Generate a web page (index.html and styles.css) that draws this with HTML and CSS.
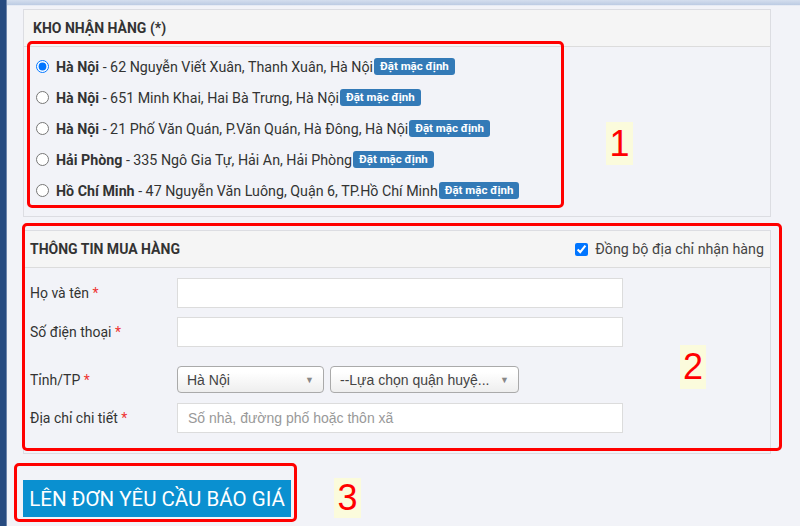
FILE: index.html
```html
<!DOCTYPE html>
<html lang="vi">
<head>
    <meta charset="UTF-8">
    <meta name="viewport" content="width=device-width, initial-scale=1.0">
    <title>Lên đơn yêu cầu báo giá</title>
    <link rel="stylesheet" href="styles.css">
</head>
<body>
    <div class="side"></div>
    <div class="page">
        <div class="topbar"></div>
        <div class="content">
            <div class="panel panel-kho">
                <div class="panel-head">KHO NHẬN HÀNG (*)</div>
                <div class="panel-body">
                    <label class="kho"><input type="radio" name="kho" checked><b>Hà Nội</b>&nbsp;- 62 Nguyễn Viết Xuân, Thanh Xuân, Hà Nội<span class="badge">Đặt mặc định</span></label>
                    <label class="kho"><input type="radio" name="kho"><b>Hà Nội</b>&nbsp;- 651 Minh Khai, Hai Bà Trưng, Hà Nội<span class="badge">Đặt mặc định</span></label>
                    <label class="kho"><input type="radio" name="kho"><b>Hà Nội</b>&nbsp;- 21 Phố Văn Quán, P.Văn Quán, Hà Đông, Hà Nội<span class="badge">Đặt mặc định</span></label>
                    <label class="kho"><input type="radio" name="kho"><b>Hải Phòng</b>&nbsp;- 335 Ngô Gia Tự, Hải An, Hải Phòng<span class="badge">Đặt mặc định</span></label>
                    <label class="kho"><input type="radio" name="kho"><b>Hồ Chí Minh</b>&nbsp;- 47 Nguyễn Văn Luông, Quận 6, TP.Hồ Chí Minh<span class="badge">Đặt mặc định</span></label>
                </div>
            </div>

            <div class="panel panel-info">
                <div class="panel-head">
                    <span>THÔNG TIN MUA HÀNG</span>
                    <label class="sync"><input type="checkbox" checked>Đồng bộ địa chỉ nhận hàng</label>
                </div>
                <div class="panel-body form">
                    <div class="row">
                        <label class="lbl">Họ và tên <i>*</i></label>
                        <input class="txt" type="text">
                    </div>
                    <div class="row">
                        <label class="lbl">Số điện thoại <i>*</i></label>
                        <input class="txt" type="text">
                    </div>
                    <div class="row row-city">
                        <label class="lbl">Tỉnh/TP <i>*</i></label>
                        <div class="sel sel-city">Hà Nội<span class="arrow">&#9660;</span></div>
                        <div class="sel sel-district">--Lựa chọn quận huyệ...<span class="arrow">&#9660;</span></div>
                    </div>
                    <div class="row">
                        <label class="lbl">Địa chỉ chi tiết <i>*</i></label>
                        <input class="txt" type="text" placeholder="Số nhà, đường phố hoặc thôn xã">
                    </div>
                </div>
            </div>

            <button class="btn-quote">LÊN ĐƠN YÊU CẦU BÁO GIÁ</button>
        </div>
    </div>

    <!-- khung chú thích -->
    <div class="mark mark-1"></div>
    <div class="num num-1">1</div>
    <div class="mark mark-2"></div>
    <div class="num num-2">2</div>
    <div class="mark mark-3"></div>
    <div class="num num-3">3</div>
</body>
</html>
```

FILE: styles.css
```css
body {
    margin: 0;
    padding: 0;
    font-family: Roboto, "Liberation Sans", Arial, sans-serif;
    font-size: 14px;
    color: #333;
    background-color: #f2f3f8;
    display: flex;
    min-height: 526px;
    overflow: hidden;
}
.side {
    width: 6px;
    flex: none;
    background-color: #274b80;
    border-right: 1px solid #6f86ab;
}
.page {
    flex: 1;
}
.topbar {
    height: 5px;
    background: linear-gradient(#d4deee, #bccbe3);
    border-bottom: 1px solid #e6ebf4;
}
.content {
    padding: 3px 0 0 16px;
}
.panel {
    width: 746px;
    border: 1px solid #dcdde2;
}
.panel-head {
    height: 36px;
    background-color: #f5f5f5;
    border-bottom: 1px solid #dcdcdc;
    display: flex;
    align-items: center;
    justify-content: space-between;
    padding: 0 6px 0 9px;
    font-size: 14px;
    font-weight: bold;
    color: #333;
}
.panel-kho .panel-body {
    padding: 4px 0 10px 0;
}
.kho {
    display: flex;
    align-items: center;
    height: 31px;
    padding-left: 12px;
    font-size: 14.25px;
    color: #333;
}
.kho input {
    margin: 0 7px 0 0;
    width: 13px;
    height: 13px;
}
.kho b {
    font-weight: bold;
}
.badge {
    display: inline-block;
    background-color: #337ab7;
    color: #fff;
    font-size: 11.5px;
    font-weight: bold;
    padding: 2px 6px;
    border-radius: 3px;
    line-height: 13px;
    margin-left: 1px;
}
.panel-info {
    margin-top: 13px;
}
.panel-info .panel-head {
    padding-left: 6px;
}
.sync {
    display: flex;
    align-items: center;
    font-weight: normal;
    font-size: 14.25px;
    color: #444;
}
.sync input {
    margin: 0 7px 0 0;
    width: 13px;
    height: 13px;
}
.form {
    padding: 10px 0 20px 6px;
}
.row {
    display: flex;
    align-items: center;
    margin-bottom: 9px;
}
.row:last-child {
    margin-bottom: 0;
}
.row-city {
    margin: 19px 0 10px;
}
.lbl {
    width: 147px;
    font-size: 14px;
    color: #333;
}
.lbl i {
    font-style: normal;
    color: #e33;
}
.txt {
    width: 446px;
    height: 30px;
    box-sizing: border-box;
    border: 1px solid #dcdcdc;
    background: #fff;
    padding: 0 10px;
    font-family: "Liberation Sans", Arial, sans-serif;
    font-size: 14px;
    outline: none;
}
.txt::placeholder {
    color: #999;
}
.sel {
    height: 27px;
    box-sizing: border-box;
    border: 1px solid #aaa;
    border-radius: 4px;
    background: linear-gradient(#fff 20%, #eee);
    display: flex;
    align-items: center;
    justify-content: space-between;
    padding: 0 9px;
    font-family: "Liberation Sans", Arial, sans-serif;
    font-size: 14px;
    color: #444;
}
.sel-city {
    width: 147px;
}
.sel-district {
    width: 189px;
    margin-left: 6px;
}
.arrow {
    font-size: 9px;
    color: #888;
}
.btn-quote {
    display: block;
    margin-top: 26px;
    width: 268px;
    height: 37px;
    border: none;
    background-color: #0a90d0;
    color: #fff;
    font-family: Roboto, "Liberation Sans", Arial, sans-serif;
    font-size: 20.5px;
    padding: 0;
}
.mark {
    position: absolute;
    border: 3px solid #f00;
    border-radius: 5px;
    box-sizing: border-box;
}
.mark-1 {
    left: 27px;
    top: 41px;
    width: 537px;
    height: 167px;
}
.mark-2 {
    left: 22px;
    top: 223px;
    width: 760px;
    height: 228px;
}
.mark-3 {
    left: 14px;
    top: 463px;
    width: 283px;
    height: 59px;
}
.num {
    position: absolute;
    background-color: #fbfbdc;
    color: #f00;
    font-family: "Liberation Sans", Arial, sans-serif;
    font-size: 36px;
    text-align: center;
}
.num-1 {
    left: 606px;
    top: 122px;
    width: 27px;
    height: 43px;
    line-height: 43px;
}
.num-2 {
    left: 680px;
    top: 345px;
    width: 26px;
    height: 44px;
    line-height: 44px;
}
.num-3 {
    left: 334px;
    top: 478px;
    width: 27px;
    height: 40px;
    line-height: 40px;
}
```
